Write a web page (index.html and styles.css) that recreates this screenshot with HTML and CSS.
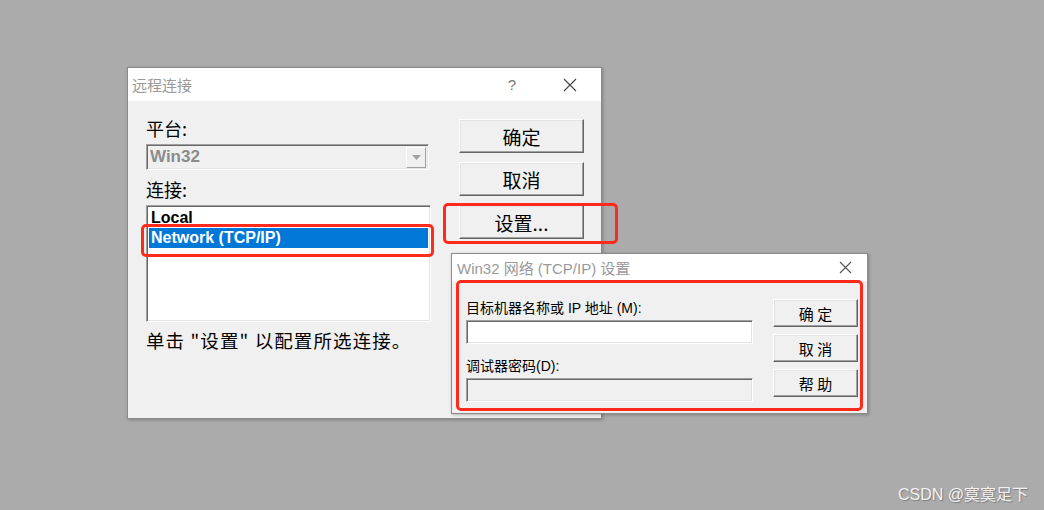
FILE: index.html
```html
<!DOCTYPE html>
<html>
<head>
  <meta charset="UTF-8" />
  <title>远程连接</title>
  <link rel="stylesheet" href="styles.css">
</head>
<body>
  <div class="desktop">

    <!-- main dialog -->
    <div class="window main-dlg">
      <div class="titlebar">
        <span class="title">远程连接</span>
        <span class="help">?</span>
        <svg class="close" width="14" height="14" viewBox="0 0 14 14"><path d="M1 1L13 13M13 1L1 13" stroke="#444" stroke-width="1.1" fill="none"/></svg>
      </div>
      <div class="dlg-body">
        <div class="left-col">
          <div class="label">平台:</div>
          <div class="combo">
            <span class="combo-text">Win32</span>
            <span class="combo-btn"><svg width="9" height="5" viewBox="0 0 9 5"><path d="M0 0H9L4.5 5Z" fill="#a0a0a0"/></svg></span>
          </div>
          <div class="label label-conn">连接:</div>
          <div class="listbox">
            <div class="item">Local</div>
            <div class="item selected">Network (TCP/IP)</div>
          </div>
          <div class="hint">单击 "设置" 以配置所选连接。</div>
        </div>
        <div class="right-col">
          <button class="btn">确定</button>
          <button class="btn">取消</button>
          <button class="btn">设置...</button>
        </div>
      </div>
    </div>

    <!-- settings dialog -->
    <div class="window net-dlg">
      <div class="titlebar small">
        <span class="title">Win32 网络 (TCP/IP) 设置</span>
        <svg class="close" width="13" height="13" viewBox="0 0 13 13"><path d="M1 1L12 12M12 1L1 12" stroke="#555" stroke-width="1.1" fill="none"/></svg>
      </div>
      <div class="net-body">
        <div class="net-fields">
          <div class="small-label">目标机器名称或 IP 地址 (M):</div>
          <div class="edit"></div>
          <div class="small-label label-pass">调试器密码(D):</div>
          <div class="edit disabled"></div>
        </div>
        <div class="net-buttons">
          <button class="btn small-btn">确 定</button>
          <button class="btn small-btn">取 消</button>
          <button class="btn small-btn">帮 助</button>
        </div>
      </div>
    </div>

    <!-- red annotations -->
    <div class="mark mark-net"></div>
    <div class="mark mark-setup"></div>
    <div class="mark mark-dlg"></div>

    <div class="watermark">CSDN @寞寞足下</div>
  </div>
</body>
</html>
```

FILE: styles.css
```css
* {
  margin: 0;
  padding: 0;
  box-sizing: border-box;
}
body {
  background: #ababab;
  font-family: "Liberation Sans", "Noto Sans CJK SC", sans-serif;
}
.desktop {
  position: relative;
  width: 1044px;
  height: 510px;
  overflow: hidden;
  background: #ababab;
}
.window {
  position: absolute;
  background: #f0f0f0;
  border: 1px solid #8a8a8a;
  box-shadow: 1px 1px 3px rgba(0, 0, 0, 0.25);
}
.main-dlg {
  left: 127px;
  top: 67px;
  width: 475px;
  height: 352px;
}
.titlebar {
  height: 33px;
  background: white;
  display: flex;
  align-items: center;
  padding-left: 4px;
  color: #999;
  font-size: 15px;
}
.titlebar .title {
  flex: 1;
  font-family: "Noto Sans CJK SC", sans-serif;
}
.titlebar .help {
  font-family: "Liberation Sans", sans-serif;
  font-size: 15px;
  color: #777;
  margin-right: 47px;
}
.titlebar .close {
  margin-right: 24px;
}
.dlg-body {
  display: flex;
  padding: 16px 0 0 18px;
}
.left-col {
  width: 285px;
  display: flex;
  flex-direction: column;
}
.label {
  height: 22px;
  line-height: 22px;
  font-size: 18px;
  font-family: "Noto Sans CJK SC", sans-serif;
  color: #000;
}
.combo {
  margin-top: 5px;
  height: 26px;
  width: 283px;
  border: 1px solid #a0a0a0;
  border-right-color: #fff;
  border-bottom-color: #fff;
  box-shadow: inset 1px 1px 0 #696969, inset -1px -1px 0 #e3e3e3;
  display: flex;
  align-items: center;
  padding: 0 2px 0 3px;
}
.combo-text {
  flex: 1;
  font-weight: bold;
  font-size: 17px;
  color: #8c8c8c;
}
.combo-btn {
  width: 20px;
  height: 21px;
  border: 1px solid #fff;
  border-right-color: #a0a0a0;
  border-bottom-color: #a0a0a0;
  display: flex;
  align-items: center;
  justify-content: center;
}
.label-conn {
  margin-top: 8px;
}
.listbox {
  margin-top: 5px;
  height: 117px;
  width: 285px;
  background: white;
  border: 1px solid #a0a0a0;
  border-right-color: #fff;
  border-bottom-color: #fff;
  box-shadow: inset 1px 1px 0 #696969, inset -1px -1px 0 #e3e3e3;
  padding: 2px 2px;
}
.item {
  height: 20px;
  line-height: 20px;
  font-size: 16px;
  font-weight: bold;
  padding-left: 2px;
  color: #000;
}
.selected {
  background: #0078d7;
  color: white;
}
.hint {
  margin-top: 7px;
  font-size: 18.5px;
  line-height: 22px;
  letter-spacing: 1.1px;
  font-family: "Noto Sans CJK SC", sans-serif;
  color: #000;
  white-space: nowrap;
}
.right-col {
  margin-left: 28px;
  padding-top: 2px;
  display: flex;
  flex-direction: column;
  gap: 9px;
}
.btn {
  width: 125px;
  height: 34px;
  background: #f0f0f0;
  border: 1px solid #fff;
  border-right-color: #646464;
  border-bottom-color: #646464;
  box-shadow: inset -1px -1px 0 #a0a0a0, inset 1px 1px 0 #e3e3e3;
  font-family: "Noto Sans CJK SC", sans-serif;
  font-size: 19px;
  color: #000;
}
.net-dlg {
  left: 451px;
  top: 253px;
  width: 417px;
  height: 161px;
}
.titlebar.small {
  height: 27px;
  padding-left: 5px;
  font-size: 15px;
}
.titlebar.small .title {
  font-family: "Liberation Sans", "Noto Sans CJK SC", sans-serif;
}
.titlebar.small .close {
  margin-right: 15px;
}
.net-body {
  display: flex;
  padding: 17px 0 0 14px;
}
.net-fields {
  width: 287px;
  display: flex;
  flex-direction: column;
}
.small-label {
  height: 20px;
  line-height: 20px;
  font-size: 14px;
  font-family: "Liberation Sans", "Noto Sans CJK SC", sans-serif;
  color: #000;
}
.edit {
  margin-top: 2px;
  height: 24px;
  background: white;
  border: 1px solid #a0a0a0;
  border-right-color: #fff;
  border-bottom-color: #fff;
  box-shadow: inset 1px 1px 0 #696969, inset -1px -1px 0 #e3e3e3;
}
.edit.disabled {
  background: #f0f0f0;
}
.label-pass {
  margin-top: 12px;
}
.net-buttons {
  margin-left: 20px;
  margin-top: 1px;
  display: flex;
  flex-direction: column;
  gap: 7px;
}
.small-btn {
  width: 85px;
  height: 28px;
  font-size: 15px;
}
.mark {
  position: absolute;
  border: 3px solid #fe2a1c;
  border-radius: 5px;
}
.mark-net {
  left: 141px;
  top: 224px;
  width: 293px;
  height: 33px;
}
.mark-setup {
  left: 443px;
  top: 203px;
  width: 175px;
  height: 41px;
}
.mark-dlg {
  left: 456px;
  top: 280px;
  width: 407px;
  height: 131px;
}
.watermark {
  position: absolute;
  right: 16px;
  top: 481px;
  font-size: 16px;
  color: #f2f2f2;
  text-shadow: 1px 1px 1px #7a7a7a;
  font-family: "Liberation Sans", "Noto Sans CJK SC", sans-serif;
}
```
